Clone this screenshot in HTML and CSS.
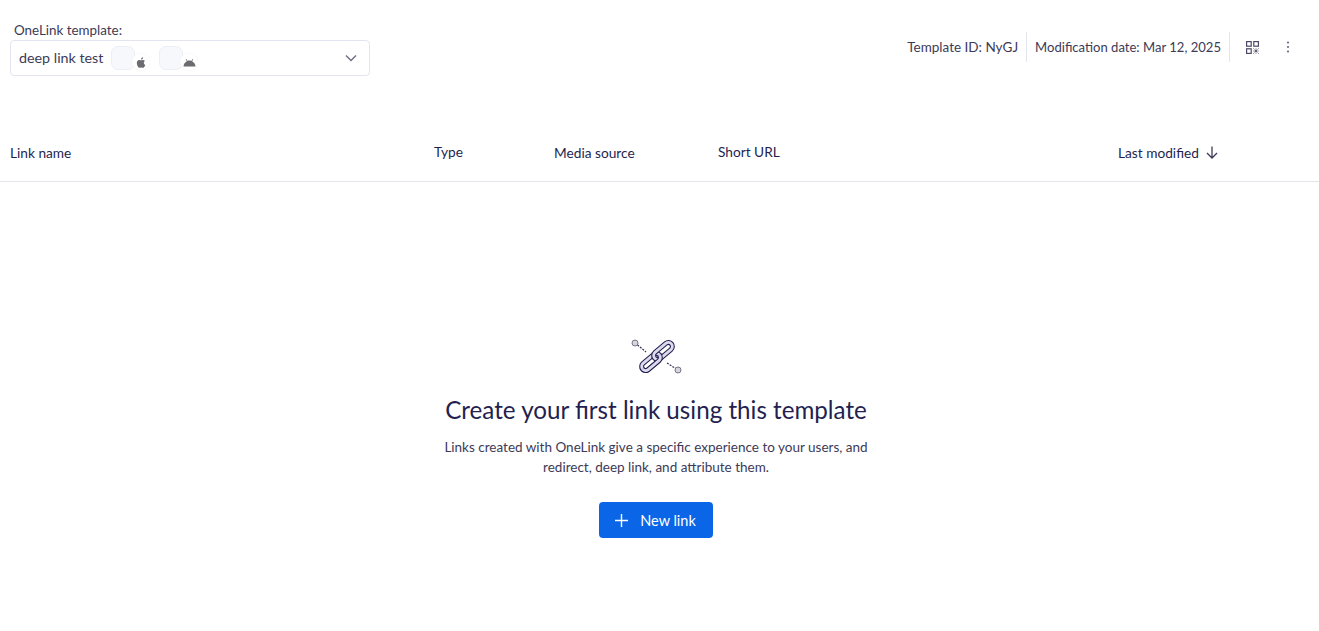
FILE: index.html
```html
<!DOCTYPE html>
<html>
<head>
    <meta charset="UTF-8">
    <title>OneLink template</title>
    <link rel="stylesheet" href="styles.css">
</head>
<body>
<section class="top">
    <div class="picker">
        <div class="picker-label">OneLink template:</div>
        <div class="select">
            <span class="select-name">deep link test</span>
            <span class="app">
                <span class="app-thumb"></span>
                <span class="app-os">
                    <svg width="12" height="13" viewBox="0 0 24 24"><path fill="#6b6b70" d="M17.600 12.700c0-2.600 2.100-3.800 2.200-3.900-1.200-1.800-3.100-2-3.700-2-1.600-.2-3.100.9-3.900.9-.8 0-2.100-.9-3.400-.9-1.700 0-3.400 1-4.300 2.600-1.800 3.200-.5 8 1.300 10.600.9 1.300 1.900 2.700 3.300 2.700 1.300-.1 1.800-.9 3.400-.9 1.600 0 2 .9 3.400.8 1.400 0 2.300-1.300 3.200-2.600 1-1.500 1.400-2.900 1.400-3-.1 0-2.900-1.100-2.900-4.300zM15 4.800c.7-.9 1.200-2.100 1.100-3.300-1 0-2.300.7-3 1.500-.7.8-1.300 2-1.100 3.200 1.100.1 2.300-.6 3-1.400z"/></svg>
                </span>
            </span>
            <span class="app">
                <span class="app-thumb"></span>
                <span class="app-os">
                    <svg width="13" height="10" viewBox="0 0 26 20"><path fill="#6b6b70" d="M1 19c.4-4.600 3-8.400 6.800-10.400L5.700 4.900l1.300-.7 2.100 3.700c1.200-.5 2.500-.7 3.900-.7s2.700.2 3.900.7L19 4.200l1.300.7-2.100 3.700C22 10.600 24.600 14.400 25 19H1z"/></svg>
                </span>
            </span>
            <svg class="chevron" width="12" height="8" viewBox="0 0 12 8"><path d="M1 1.500l5 5 5-5" fill="none" stroke="#6f6c85" stroke-width="1.400"/></svg>
        </div>
    </div>
    <div class="meta">
        <span class="meta-item meta-id">Template ID: NyGJ</span>
        <span class="meta-item meta-date">Modification date: Mar 12, 2025</span>
        <span class="meta-icon meta-qr">
            <svg width="13" height="13" viewBox="0 0 13 13" fill="none" stroke="#4d4a63" stroke-width="1.200">
                <rect x=".6" y=".6" width="4.600" height="4.600"/>
                <rect x="7.800" y=".6" width="4.600" height="4.600"/>
                <rect x=".6" y="7.800" width="4.600" height="4.600"/>
                <path d="M7.500 7.500l5 5M12.500 7.500l-5 5M10 7.500v5M7.500 10h5" stroke-width="1" stroke-dasharray="1.200 .8"/>
            </svg>
        </span>
        <span class="meta-icon">
            <svg width="4" height="12" viewBox="0 0 4 12" fill="#6f6c85">
                <circle cx="2" cy="1.500" r="1.100"/>
                <circle cx="2" cy="6" r="1.100"/>
                <circle cx="2" cy="10.500" r="1.100"/>
            </svg>
        </span>
    </div>
</section>

<div class="head-row">
    <span class="col col-name">Link name</span>
    <span class="col col-type">Type</span>
    <span class="col col-media">Media source</span>
    <span class="col col-url">Short URL</span>
    <span class="col col-date">Last modified
        <svg width="12" height="13" viewBox="0 0 12 13" fill="none" stroke="#3d3a57" stroke-width="1.300"><path d="M6 .5v11.500M1 7l5 5 5-5"/></svg>
    </span>
</div>

<section class="empty">
    <svg class="empty-icon" width="50" height="38" viewBox="0 0 50 38">
        <defs>
            <clipPath id="linkClip"><rect x="-20" y="0" width="40" height="10"/></clipPath>
        </defs>
        <path d="M4 5L15 14M36 25L47 32" fill="none" stroke="#3a3657" stroke-width="1.300" stroke-dasharray="2 1.200"/>
        <circle cx="4" cy="5" r="3" fill="#d5d5db" stroke="#77758a"/>
        <circle cx="47" cy="32" r="3" fill="#d5d5db" stroke="#77758a"/>
        <g transform="translate(20 24) rotate(-40)" fill="none">
            <rect x="-11" y="-4" width="22" height="8" rx="4" stroke="#241f50" stroke-width="5"/>
            <rect x="-11" y="-4" width="22" height="8" rx="4" stroke="#dcdbec" stroke-width="2.800"/>
        </g>
        <g transform="translate(32 13) rotate(-40)" fill="none">
            <rect x="-11" y="-4" width="22" height="8" rx="4" stroke="#241f50" stroke-width="5"/>
            <rect x="-11" y="-4" width="22" height="8" rx="4" stroke="#dcdbec" stroke-width="2.800"/>
        </g>
        <g transform="translate(20 24) rotate(-40)" fill="none" clip-path="url(#linkClip)">
            <rect x="-11" y="-4" width="22" height="8" rx="4" stroke="#241f50" stroke-width="5"/>
            <rect x="-11" y="-4" width="22" height="8" rx="4" stroke="#dcdbec" stroke-width="2.800"/>
        </g>
    </svg>
    <h1 class="empty-title">Create your first link using this template</h1>
    <p class="empty-text">Links created with OneLink give a specific experience to your users, and redirect, deep link, and attribute them.</p>
    <div class="btn">
        <svg width="13" height="13" viewBox="0 0 13 13"><path d="M6.500 0v13M0 6.500h13" stroke="#fff" stroke-width="1.400"/></svg>
        <span class="btn-text">New link</span>
    </div>
</section>
</body>
</html>
```

FILE: styles.css
```css
* {
    margin: 0;
    padding: 0;
    box-sizing: border-box;
}

html, body {
    width: 100%;
    height: 100%;
    overflow: hidden;
}

body {
    font-family: "Lato", "Open Sans", sans-serif;
    font-size: 13px;
    color: #241f50;
    background: #fff;
}

.top {
    display: flex;
    justify-content: space-between;
    align-items: flex-start;
    padding: 22px 13px 0 10px;
    height: 121px;
}

.picker {
    width: 360px;
}

.picker-label {
    padding-left: 4px;
    height: 18px;
    line-height: 16px;
    font-size: 13.4px;
    color: #3d3a57;
}

.select {
    display: flex;
    align-items: center;
    position: relative;
    height: 36px;
    padding-left: 8px;
    border: 1px solid #e2e5ef;
    border-radius: 4px;
}

.select-name {
    margin-right: 8px;
    margin-top: -2px;
    font-size: 14.3px;
    color: #3d3a57;
}

.app {
    position: relative;
    width: 24px;
    height: 24px;
    margin-right: 24px;
}

.app-thumb {
    display: block;
    width: 24px;
    height: 24px;
    background: #f7f8fb;
    border: 1px solid #eceef5;
    border-radius: 7px;
}

.app-os {
    position: absolute;
    right: -15px;
    top: 7px;
    display: flex;
    align-items: center;
    justify-content: center;
    width: 18px;
    height: 18px;
    background: #fff;
    border-radius: 50%;
    box-shadow: 0 0 1px #e2e5ef;
}

.chevron {
    position: absolute;
    right: 12px;
    top: 13px;
}

.meta {
    display: flex;
    align-items: center;
    height: 30px;
    margin-top: 10px;
    color: #3d3a57;
}

.meta-item {
    display: flex;
    align-items: center;
    height: 30px;
    padding-right: 8px;
    border-right: 1px solid #e2e5ef;
}

.meta-id {
    font-size: 13.5px;
}

.meta-date {
    padding-left: 8px;
    font-size: 13.07px;
}

.meta-icon {
    display: flex;
    justify-content: center;
    width: 36px;
}

.meta-qr {
    margin-left: 4px;
}

.head-row {
    display: flex;
    align-items: center;
    height: 61px;
    padding-top: 2px;
    padding-left: 10px;
    border-bottom: 1px solid #e2e3eb;
    font-size: 13.7px;
}

.col-name {
    width: 424px;
}

.col-type {
    width: 120px;
    margin-top: -2px;
}

.col-media {
    width: 164px;
}

.col-url {
    width: 400px;
    margin-top: -2px;
}

.col-date {
    display: flex;
    align-items: center;
    gap: 7px;
}

.empty {
    display: flex;
    flex-direction: column;
    align-items: center;
    padding-top: 156px;
    padding-right: 7px;
}

.empty-icon {
    display: block;
    margin-bottom: 19px;
    overflow: visible;
}

.empty-title {
    font-size: 24.2px;
    font-weight: 400;
    line-height: 30px;
}

.empty-text {
    width: 440px;
    margin-top: 12px;
    font-size: 13.5px;
    line-height: 20px;
    text-align: center;
    color: #3d3a57;
}

.btn {
    display: flex;
    align-items: center;
    gap: 12px;
    height: 36px;
    margin-top: 25px;
    padding: 0 17px 0 16px;
    background: #0a66e6;
    border-radius: 4px;
    color: #fff;
}

.btn-text {
    font-size: 14.5px;
    color: #fff;
}
```
